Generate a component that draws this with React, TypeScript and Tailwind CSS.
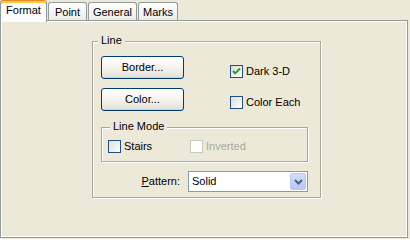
import React from 'react';

const Check: React.FC<{ checked?: boolean; disabled?: boolean }> = ({ checked, disabled }) => (
  <div
    className={
      disabled
        ? 'w-[13px] h-[13px] border border-[#CAC8BB] bg-white shrink-0'
        : 'w-[13px] h-[13px] border border-[#1C5180] bg-gradient-to-br from-[#DCDCD7] to-white shrink-0 flex items-center justify-center'
    }
  >
    {checked && (
      <svg width="9" height="9" viewBox="0 0 9 9">
        <path d="M1 4 L3.2 6.4 L8 1.5" fill="none" stroke="#21A121" strokeWidth="2" />
      </svg>
    )}
  </div>
);

const XpButton: React.FC<{ label: string }> = ({ label }) => (
  <button className="w-[83px] h-[23px] border border-[#003C74] rounded-[3px] bg-gradient-to-b from-white via-[#F4F3EE] to-[#E3E1D6] text-[11px] leading-[13px] text-black shadow-[inset_0_-1px_0_#D6D0C5]">
    {label}
  </button>
);

const Tab: React.FC<{ label: string; w: string }> = ({ label, w }) => (
  <div
    className={`${w} mt-[2px] ml-px h-[18px] border border-b-0 border-[#919B9C] rounded-t-[3px] bg-gradient-to-b from-white to-[#ECEBE6] flex justify-center pt-[3px] leading-[13px]`}
  >
    {label}
  </div>
);

export default function App() {
  return (
    <div className="w-[410px] h-[239px] bg-[#ECE9D8] text-[11px] text-black font-['Liberation_Sans',Arial,sans-serif] overflow-hidden">
      {/* tab strip */}
      <div className="flex items-start h-[20px]">
        <div className="relative z-10 w-[47px] h-[22px] bg-[#FCFCFE] border-x border-[#919B9C] border-t border-t-[#E68B2C] rounded-t-[3px] shadow-[inset_0_2px_0_#FFC83C] flex justify-center pt-[3px] leading-[13px]">
          Format
        </div>
        <Tab label="Point" w="w-[39px]" />
        <Tab label="General" w="w-[49px]" />
        <Tab label="Marks" w="w-[40px]" />
      </div>

      {/* panel */}
      <div className="w-[408px] h-[218px] border border-[#919B9C] shadow-[inset_1px_1px_0_#fff,inset_-1px_-1px_0_#fff] pt-[20px] pl-[91px]">
        <div className="relative w-[229px] h-[157px] border border-[#ACA899] shadow-[inset_1px_1px_0_#fff,1px_1px_0_#fff] pl-[8px] pt-[14px]">
          <span className="absolute top-[-8px] left-[5px] px-[3px] bg-[#ECE9D8] leading-[13px]">Line</span>

          <div className="flex items-start">
            <XpButton label="Border..." />
            <label className="ml-[46px] mt-[9px] flex items-center gap-[3px] leading-[13px]">
              <Check checked />
              <span>Dark 3-D</span>
            </label>
          </div>

          <div className="flex items-start mt-[9px]">
            <XpButton label="Color..." />
            <label className="ml-[46px] mt-[8px] flex items-center gap-[3px] leading-[13px]">
              <Check />
              <span>Color Each</span>
            </label>
          </div>

          <div className="relative mt-[16px] w-[207px] h-[35px] border border-[#ACA899] shadow-[inset_1px_1px_0_#fff,1px_1px_0_#fff] pl-[6px] pt-[12px] flex items-start">
            <span className="absolute top-[-8px] left-[8px] px-[3px] bg-[#ECE9D8] leading-[13px]">Line Mode</span>
            <label className="w-[82px] flex items-center gap-[3px] leading-[13px]">
              <Check />
              <span>Stairs</span>
            </label>
            <label className="flex items-center gap-[3px] leading-[13px] text-[#ACA899]">
              <Check disabled />
              <span>Inverted</span>
            </label>
          </div>

          <div className="mt-[9px] w-[207px] flex items-center justify-end gap-[8px]">
            <span className="leading-[13px]">
              <span className="underline">P</span>attern:
            </span>
            <div className="w-[120px] h-[21px] border border-[#7F9DB9] bg-white flex items-center justify-between">
              <span className="pl-[3px] leading-[13px]">Solid</span>
              <div className="w-[16px] h-[17px] mr-px rounded-[2px] border border-[#B9C9EF] bg-gradient-to-b from-[#D1DDFB] to-[#B4C8F6] flex items-center justify-center">
                <svg width="9" height="6" viewBox="0 0 9 6">
                  <path d="M1 1 L4.5 4.5 L8 1" fill="none" stroke="#4D6185" strokeWidth="2" />
                </svg>
              </div>
            </div>
          </div>
        </div>
      </div>
    </div>
  );
}
